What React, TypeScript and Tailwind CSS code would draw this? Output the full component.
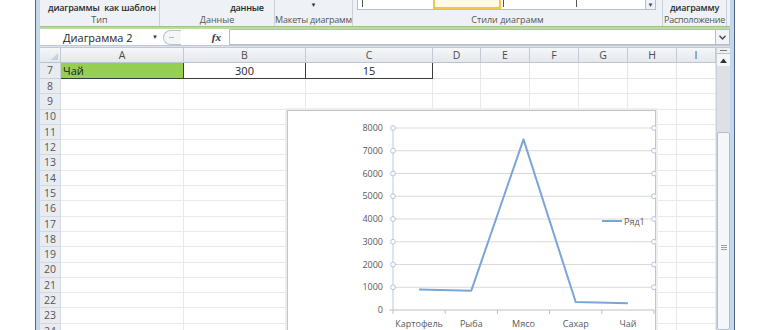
import React from 'react';

const cols = [
  { l: 'A', c: 'w-[123px]' },
  { l: 'B', c: 'w-[122px]' },
  { l: 'C', c: 'w-[127px]' },
  { l: 'D', c: 'w-[48px]' },
  { l: 'E', c: 'w-[49px]' },
  { l: 'F', c: 'w-[49px]' },
  { l: 'G', c: 'w-[49px]' },
  { l: 'H', c: 'w-[49px]' },
  { l: 'I', c: 'w-[39px]' },
];
const rows = Array.from({ length: 17 }, (_, i) => i + 8);

function Chart() {
  const ticks = [8000, 7000, 6000, 5000, 4000, 3000, 2000, 1000];
  const y = (v: number) => 200 - v * 0.02275;
  const cats = ['Картофель', 'Рыба', 'Мясо', 'Сахар', 'Чай'];
  const vals = [900, 850, 7500, 350, 300];
  const step = 52.2;
  const cx = (i: number) => 106 + step * (i + 0.5);
  const pts = vals.map((v, i) => `${cx(i)},${y(v)}`).join(' ');
  const font = { fontFamily: '"Open Sans", "Liberation Sans", sans-serif' };
  return (
    <div className="absolute left-[247px] top-[62px] w-[369px] h-[230px] bg-white border border-[#c4c4c4] shadow-[0_0_0_2px_#eeeeee]">
      <svg className="absolute left-[-1px] top-[-1px]" width="369" height="230" viewBox="0 0 369 230">
        {ticks.map((t) => (
          <line key={t} x1="106" x2="367" y1={y(t)} y2={y(t)} stroke="#d9d9d9" strokeWidth="1" />
        ))}
        <line x1="106" x2="367" y1={y(0)} y2={y(0)} stroke="#bfbfbf" strokeWidth="1" />
        <line x1="106" x2="106" y1={y(8000)} y2={y(0)} stroke="#b9c9dc" strokeWidth="1" />
        <line x1="102" x2="106" y1={y(0)} y2={y(0)} stroke="#bfbfbf" strokeWidth="1" />
        {[0, 1, 2, 3, 4, 5].map((k) => (
          <line key={k} x1={106 + step * k} x2={106 + step * k} y1={y(0)} y2={y(0) + 4} stroke="#bfbfbf" strokeWidth="1" />
        ))}
        {ticks.map((t) => (
          <g key={'c' + t}>
            <circle cx="106" cy={y(t)} r="2.4" fill="#fff" stroke="#a9bed9" strokeWidth="0.9" />
            <circle cx="367" cy={y(t)} r="2.4" fill="#fff" stroke="#a9bed9" strokeWidth="0.9" />
          </g>
        ))}
        {[...ticks, 0].map((t) => (
          <text key={'l' + t} x="96" y={y(t) + 3} textAnchor="end" fontSize="9" fill="#595959" style={font}>
            {t}
          </text>
        ))}
        {cats.map((c, i) => (
          <text key={c} x={cx(i)} y="217" textAnchor="middle" fontSize="9" fill="#595959" style={font}>
            {c}
          </text>
        ))}
        <polyline points={pts} fill="none" stroke="#79a5d8" strokeWidth="2" strokeLinejoin="round" />
        <line x1="315" x2="335" y1="111" y2="111" stroke="#79a5d8" strokeWidth="2" />
        <text x="337" y="114.5" fontSize="9" fill="#595959" style={font}>
          Ряд1
        </text>
      </svg>
    </div>
  );
}

export default function App() {
  return (
    <div className="w-[770px] h-[330px] overflow-hidden bg-white flex font-['Open_Sans','Noto_Sans',sans-serif]">
      <div className="w-[35px] shrink-0" />
      <div className="w-[700px] shrink-0 h-full flex border-l border-r border-[#4d6580] bg-[#c5d7ec]">
        <div className="ml-[4px] w-[690px] h-full flex flex-col bg-white">
          {/* Ribbon */}
          <div className="h-[26px] shrink-0 flex bg-[#eef2f6] text-[#2b2b2b]">
            <div className="w-[120px] flex flex-col border-r border-[#c9d1da]">
              <div className="h-[14px] flex items-center pl-[8px] text-[9px] font-semibold leading-none tracking-[-0.2px]">
                <div className="w-[48px] text-center whitespace-nowrap">диаграммы</div>
                <div className="w-[52px] ml-[8px] text-center whitespace-nowrap">как шаблон</div>
              </div>
              <div className="h-[12px] text-center text-[9px] leading-[12px] text-[#555]">Тип</div>
            </div>
            <div className="w-[115px] flex flex-col border-r border-[#c9d1da]">
              <div className="h-[14px] flex items-center pl-[68px] text-[9px] font-semibold leading-none tracking-[-0.2px]">
                <div className="w-[38px] text-center whitespace-nowrap">данные</div>
              </div>
              <div className="h-[12px] text-center text-[9px] leading-[12px] text-[#555]">Данные</div>
            </div>
            <div className="w-[78px] flex flex-col border-r border-[#c9d1da]">
              <div className="h-[14px] flex items-start justify-center pt-[2px] text-[6px] leading-none text-[#333]">▼</div>
              <div className="h-[12px] text-center text-[9px] leading-[12px] text-[#555] whitespace-nowrap tracking-[-0.2px]">Макеты диаграмм</div>
            </div>
            <div className="w-[310px] flex flex-col border-r border-[#c9d1da]">
              <div className="h-[14px] pl-[4px]">
                <div className="h-[10px] w-[299px] flex bg-white border-l border-r border-b border-[#b5bfcb]">
                  <div className="w-[4px]" />
                  <div className="w-px h-[7px] bg-[#555]" />
                  <div className="w-[70px]" />
                  <div className="w-[68px] h-[9px] border-2 border-t-0 border-[#f2c54b] bg-[#fffbea]" />
                  <div className="w-[2px]" />
                  <div className="w-px h-[7px] bg-[#555]" />
                  <div className="w-[72px]" />
                  <div className="w-px h-[7px] bg-[#555]" />
                  <div className="flex-1" />
                  <div className="w-[10px] h-[9px] border-l border-[#b5bfcb] bg-[#eef1f5] flex items-center justify-center text-[6px] text-[#444] leading-none">▼</div>
                </div>
              </div>
              <div className="h-[12px] text-center text-[9px] leading-[12px] text-[#555]">Стили диаграмм</div>
            </div>
            <div className="w-[64px] flex flex-col border-r border-[#c9d1da]">
              <div className="h-[14px] flex items-center justify-center text-[9px] font-semibold leading-none whitespace-nowrap tracking-[-0.2px]">диаграмму</div>
              <div className="h-[12px] text-center text-[9px] leading-[12px] text-[#555] whitespace-nowrap tracking-[-0.3px]">Расположение</div>
            </div>
            <div className="flex-1" />
          </div>
          {/* green band */}
          <div className="h-[3px] shrink-0 bg-[#bcd9a9] border-t border-[#9cc487]" />
          {/* formula bar */}
          <div className="h-[16px] shrink-0 flex items-center bg-white">
            <div className="w-[2px]" />
            <div className="w-[118px] h-full flex items-center relative">
              <span className="pl-[21px] text-[11px] text-[#1e1e1e] leading-none whitespace-nowrap">Диаграмма 2</span>
              <span className="absolute right-[2px] top-[5px] text-[6px] text-[#333] leading-none">▼</span>
            </div>
            <div className="w-[3px]" />
            <div className="w-[18px] h-[15px] rounded-l-full border border-r-0 border-[#b9c1cb] bg-[#f4f6f8] flex items-center pl-[5px]">
              <div className="w-[5px] h-px bg-[#b0b8c2]" />
            </div>
            <div className="w-[48px] h-full flex items-center justify-end pr-[8px]">
              <span className="font-['Liberation_Serif',serif] italic font-bold text-[11px] leading-none text-[#333]">fx</span>
            </div>
            <div className="flex-1 h-full border border-[#b4bdc8] bg-white" />
            <div className="w-[14px] h-full border border-l-0 border-[#b4bdc8] bg-[#f1f3f6] flex items-center justify-center">
              <svg width="7" height="5" viewBox="0 0 7 5"><path d="M0.5 0.8 L3.5 4 L6.5 0.8" fill="none" stroke="#444" strokeWidth="1.3" /></svg>
            </div>
          </div>
          <div className="h-[3px] shrink-0 bg-[#dde2e8] border-t border-b border-[#c1c8d1]" />
          {/* sheet */}
          <div className="flex-1 min-h-0 flex overflow-hidden">
            <div className="w-[676px] relative flex flex-col">
              {/* column headers */}
              <div className="h-[15px] shrink-0 flex bg-gradient-to-b from-[#f5f7f9] to-[#e4e8ed] border-b border-[#bcc4ce] text-[10.5px] text-[#4a4a4a]">
                <div className="w-[21px] border-r border-[#c3cad3] relative">
                  <div className="absolute right-[2px] bottom-[2px] w-0 h-0 border-l-[7px] border-l-transparent border-b-[7px] border-b-[#c9cfd6]" />
                </div>
                {cols.map((c) => (
                  <div key={c.l} className={`${c.c} border-r border-[#c3cad3] flex items-center justify-center leading-none`}>
                    {c.l}
                  </div>
                ))}
              </div>
              {/* row 7 */}
              <div className="h-[16px] shrink-0 flex text-[11px] text-[#1e1e1e]">
                <div className="w-[21px] bg-[#e8ecf1] border-r border-b border-[#c9d0d8] flex items-center justify-center text-[10.5px] text-[#555] leading-none">7</div>
                <div className="w-[123px] bg-[#94cf52] border-r border-b border-[#3c3c3c] flex items-center pl-[2px] leading-none">Чай</div>
                <div className="w-[122px] border-r border-b border-[#3c3c3c] flex items-center justify-center leading-none">300</div>
                <div className="w-[127px] border-r border-b border-[#3c3c3c] flex items-center justify-center leading-none">15</div>
                {cols.slice(3).map((c) => (
                  <div key={c.l} className={`${c.c} border-r border-b border-[#e3e6ea]`} />
                ))}
              </div>
              {rows.map((r) => (
                <div key={r} className="h-[15.3px] shrink-0 flex">
                  <div className="w-[21px] bg-[#e8ecf1] border-r border-b border-[#d3d9e0] flex items-center justify-center text-[10.5px] text-[#555] leading-none">
                    {r}
                  </div>
                  {cols.map((c) => (
                    <div key={c.l} className={`${c.c} border-r border-b border-[#e6e9ed]`} />
                  ))}
                </div>
              ))}
              <Chart />
            </div>
            {/* scrollbar */}
            <div className="w-[14px] flex flex-col bg-[#e3e7ec] border-l border-[#cdd3da]">
              <div className="h-[6px] shrink-0 flex items-center justify-center bg-[#eef1f4] border-b border-[#b9c1cb]">
                <div className="w-[7px] h-px bg-[#777]" />
              </div>
              <div className="h-[12px] shrink-0 flex items-center justify-center bg-[#f3f5f7]">
                <svg width="7" height="5" viewBox="0 0 7 5"><path d="M0 5 L3.5 0.5 L7 5 Z" fill="#333" /></svg>
              </div>
              <div className="h-[66px] shrink-0 bg-[#dde1e6]" />
              <div className="flex-1 bg-[#f4f6f8] border border-[#b5bdc7] rounded-[2px] relative">
                <div className="absolute left-[3px] top-[112px] w-[6px] flex flex-col gap-[1px]">
                  <div className="h-px bg-[#9aa3ad]" />
                  <div className="h-px bg-[#9aa3ad]" />
                  <div className="h-px bg-[#9aa3ad]" />
                </div>
              </div>
            </div>
          </div>
        </div>
        <div className="w-[4px]" />
      </div>
    </div>
  );
}
